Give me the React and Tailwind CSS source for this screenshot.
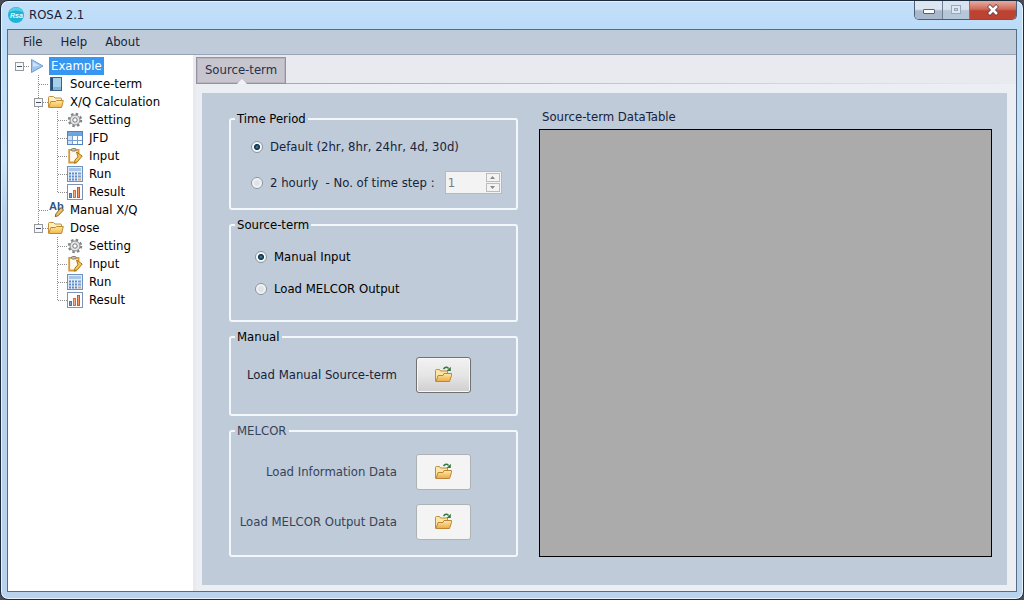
import React, { useState } from "react";

const FolderOpen = () => (
  <svg viewBox="0 0 16 16" className="h-4 w-4 shrink-0" aria-hidden="true">
    <path d="M0.5 13V3.5Q0.5 2.5 1.5 2.5H5.5L7 4H12.5Q13.5 4 13.5 5V12" fill="#fdf0bd" stroke="#c09040" />
    <path d="M0.7 13.5L2.8 7.5H7.5L8.5 6.5H15.3L13.6 13.5Z" fill="url(#folderFill)" stroke="#bd8a34" strokeLinejoin="round" />
    <defs>
      <linearGradient id="folderFill" x1="0" y1="0" x2="0" y2="1">
        <stop offset="0" stopColor="#ffeaa3" />
        <stop offset="1" stopColor="#f0b54d" />
      </linearGradient>
    </defs>
  </svg>
);

const LoadIcon = () => (
  <svg viewBox="0 0 18 18" className="h-[18px] w-[18px]" aria-hidden="true">
    <defs>
      <linearGradient id="loadFill" x1="0" y1="0" x2="0" y2="1">
        <stop offset="0" stopColor="#ffe9a8" />
        <stop offset="1" stopColor="#eda945" />
      </linearGradient>
    </defs>
    <path d="M0.5 15.5V4.5Q0.5 3.5 1.5 3.5H4.5L5.5 5H12.5V9" fill="#fbe6a2" stroke="#bb8f42" />
    <path d="M1 15.5L3 9.5H8L9 7.5H16.5V9.5L14.5 15.5Z" fill="url(#loadFill)" stroke="#bd8538" strokeLinejoin="round" />
    <path d="M8.5 3Q11 -0.2 13.6 2.4" fill="none" stroke="#34783c" strokeWidth="1.4" />
    <path d="M15.8 0.8V5H11.6Z" fill="#34783c" />
  </svg>
);

const PlayIcon = () => (
  <svg viewBox="0 0 16 16" className="h-4 w-4 shrink-0" aria-hidden="true">
    <path d="M2.5 1.5L14 8L2.5 14.5Z" fill="#9fc5ee" stroke="#6e9ccf" strokeLinejoin="round" />
    <path d="M4 4L10.5 7.8L4 8.8Z" fill="#cfe3f8" />
  </svg>
);

const BookIcon = () => (
  <svg viewBox="0 0 16 16" className="h-4 w-4 shrink-0" aria-hidden="true">
    <rect x="2.5" y="1.5" width="11" height="13" fill="#7db7d8" stroke="#3a6289" />
    <rect x="5" y="2" width="8" height="9" fill="#a5d1e9" />
    <path d="M4 2V14" stroke="#2c5079" strokeWidth="2" />
    <path d="M5 13.2H13" stroke="#8fb6d2" />
  </svg>
);

const GearIcon = () => (
  <svg viewBox="0 0 16 16" className="h-4 w-4 shrink-0" aria-hidden="true">
    <circle cx="8" cy="8" r="6" fill="none" stroke="#808286" strokeWidth="2.4" strokeDasharray="2.4 2.31" />
    <circle cx="8" cy="8" r="5" fill="#e3e4e6" stroke="#8c8e92" />
    <circle cx="8" cy="8" r="2.2" fill="#fff" stroke="#77797d" />
  </svg>
);

const TableIcon = () => (
  <svg viewBox="0 0 16 16" className="h-4 w-4 shrink-0" aria-hidden="true">
    <rect x="0.5" y="1.5" width="15" height="13" fill="#fff" stroke="#5583bd" />
    <rect x="1" y="2" width="14" height="3" fill="#6fa5e2" />
    <rect x="1" y="5" width="5" height="9" fill="#cfe1f6" />
    <path d="M5.5 2V14M10.5 2V14M1 5.5H15M1 10.5H15" stroke="#759fd1" fill="none" />
  </svg>
);

const ClipboardIcon = () => (
  <svg viewBox="0 0 16 16" className="h-4 w-4 shrink-0" aria-hidden="true">
    <path d="M2.2 1.8H11.5V11L9 14.5H2.2Z" fill="#fffaf0" stroke="#d39a38" strokeWidth="1.8" />
    <rect x="4.5" y="0.5" width="4.5" height="2.5" rx="1" fill="#bcc3cc" stroke="#8a7c62" />
    <path d="M9.5 4L15.2 8L10.5 13.5L7.5 15.2L8 12L11 8.7Z" fill="#f5c65c" stroke="#a8751f" />
  </svg>
);

const CalcIcon = () => (
  <svg viewBox="0 0 16 16" className="h-4 w-4 shrink-0" aria-hidden="true">
    <rect x="0.5" y="0.5" width="15" height="15" fill="#e3ecf8" stroke="#6d91c1" />
    <rect x="2" y="2" width="12" height="3" fill="#a9c5e8" />
    <path d="M2 7.5H11M2 10.5H11M2 13.5H11" stroke="#5f8cc8" strokeWidth="2" strokeDasharray="2 1" />
    <path d="M11 7.5H14M11 10.5H14" stroke="#7ba2d6" strokeWidth="2" />
    <path d="M11 13.5H14" stroke="#d9a47c" strokeWidth="2" />
  </svg>
);

const ChartIcon = () => (
  <svg viewBox="0 0 16 16" className="h-4 w-4 shrink-0" aria-hidden="true">
    <rect x="0.5" y="0.5" width="15" height="15" fill="#fff" stroke="#7d92b8" />
    <rect x="2.5" y="9.5" width="2" height="4" fill="#6fa3dc" stroke="#4478b5" />
    <rect x="6.5" y="6.5" width="2" height="7" fill="#f7ad86" stroke="#dd6a3a" />
    <rect x="10.5" y="3.5" width="2" height="10" fill="#f49a68" stroke="#d4522a" />
  </svg>
);

const AbIcon = () => (
  <svg viewBox="0 0 16 16" className="h-4 w-4 shrink-0 overflow-visible" aria-hidden="true">
    <text x="1" y="8" fontSize="11" fontWeight="700" fontFamily="Liberation Sans, sans-serif" fill="#2c5488">
      Ab
    </text>
    <path d="M13 5.5L15.5 8L10 13.8L7.2 14.6L8 11.8Z" fill="#f1c453" stroke="#7b6134" />
  </svg>
);

const ICONS = {
  play: PlayIcon,
  book: BookIcon,
  folder: FolderOpen,
  gear: GearIcon,
  table: TableIcon,
  clipboard: ClipboardIcon,
  calc: CalcIcon,
  chart: ChartIcon,
  ab: AbIcon,
};

// Guides per row, one letter per level:
// r root, x expandable, X last expandable, t branch, e last branch, v pass-through, n empty
const ROWS = [
  { guides: "r", icon: "play", label: "Example" },
  { guides: "nt", icon: "book", label: "Source-term" },
  { guides: "nx", icon: "folder", label: "X/Q Calculation" },
  { guides: "nvt", icon: "gear", label: "Setting" },
  { guides: "nvt", icon: "table", label: "JFD" },
  { guides: "nvt", icon: "clipboard", label: "Input" },
  { guides: "nvt", icon: "calc", label: "Run" },
  { guides: "nve", icon: "chart", label: "Result" },
  { guides: "nt", icon: "ab", label: "Manual X/Q" },
  { guides: "nX", icon: "folder", label: "Dose" },
  { guides: "nnt", icon: "gear", label: "Setting" },
  { guides: "nnt", icon: "clipboard", label: "Input" },
  { guides: "nnt", icon: "calc", label: "Run" },
  { guides: "nne", icon: "chart", label: "Result" },
];

const Guide = ({ kind }) => {
  const expandable = "rxX".includes(kind);
  return (
    <svg viewBox="0 0 19 18" className="h-[18px] w-[19px] shrink-0" aria-hidden="true">
      <g stroke="#8c8c8c" strokeDasharray="1 1" fill="none">
        {"xvt".includes(kind) && <path d="M9.5 0V18" />}
        {"Xe".includes(kind) && <path d="M9.5 0V10" />}
        {"rxXte".includes(kind) && <path d="M10 9.5H19" />}
      </g>
      {expandable && (
        <g>
          <rect x="5.5" y="5.5" width="8" height="8" fill="#f7f7f7" stroke="#989898" />
          <path d="M7 9.5H12" stroke="#3f4f77" />
        </g>
      )}
    </svg>
  );
};

const Tree = () => {
  const [selected, setSelected] = useState(0);
  return (
    <nav aria-label="Project" className="w-[185px] shrink-0 bg-white pt-0.5 pl-0.5">
      <ul>
        {ROWS.map((row, i) => {
          const Icon = ICONS[row.icon];
          return (
            <li key={i} className="flex h-[18px] items-center">
              {row.guides.split("").map((k, j) => (
                <Guide key={j} kind={k} />
              ))}
              <Icon />
              <button
                type="button"
                onClick={() => setSelected(i)}
                className={
                  i === selected
                    ? "ml-1 h-[18px] bg-[#3796f0] px-0.5 leading-[18px] text-white"
                    : "ml-1 h-[18px] px-0.5 leading-[18px] text-black"
                }
              >
                {row.label}
              </button>
            </li>
          );
        })}
      </ul>
    </nav>
  );
};

const Group = ({ title, className, muted, children }) => (
  <fieldset className={"rounded-[3px] border-2 border-[#f2f7fb] " + className}>
    <legend className={muted ? "ml-1 px-0.5 leading-4 text-[#35435a]" : "ml-1 px-0.5 leading-4 text-black"}>{title}</legend>
    {children}
  </fieldset>
);

const radioClass =
  "m-0 h-3 w-3 shrink-0 appearance-none rounded-full border border-[#8b96a2] bg-[radial-gradient(circle,#dfe2e6_30%,#fafafa_70%)] checked:bg-[radial-gradient(circle_at_50%_50%,#4f94b0_0%,#164058_25%,#12384e_38%,#f1f5f7_48%)]";

const Radio = ({ name, label, checked, onChange, strong }) => (
  <label className={strong ? "flex items-center gap-[7px] text-black" : "flex items-center gap-[7px]"}>
    <input type="radio" name={name} checked={checked} onChange={onChange} className={radioClass} />
    <span className="whitespace-pre">{label}</span>
  </label>
);

const LoadRow = ({ id, label, muted }) => (
  <div className="flex items-center justify-end gap-[19px] pr-[45px]">
    <label htmlFor={id} className={muted ? "text-[#35435a]" : "text-[#16233c]"}>
      {label}
    </label>
    <button
      id={id}
      type="button"
      aria-label={label}
      className={
        muted
          ? "flex h-9 w-[55px] items-center justify-center rounded-[3px] border border-[#adb2b5] bg-[#f4f4f4]"
          : "flex h-9 w-[55px] items-center justify-center rounded-[3px] border border-[#707070] bg-linear-to-b from-[#f2f2f2] via-[#e6e6e6] to-[#cfcfcf] inset-ring inset-ring-[#f8f8f8]"
      }
    >
      <LoadIcon />
    </button>
  </div>
);

const TitleBar = () => (
  <header className="flex h-7 shrink-0 items-start justify-between">
    <div className="flex h-7 items-center gap-[5px] pl-px">
      <svg viewBox="0 0 16 16" className="h-4 w-4" aria-hidden="true">
        <circle cx="8" cy="8" r="8" fill="#1fb4d6" />
        <path d="M0.8 5A8 8 0 0 1 15.2 5Q8 2 0.8 5" fill="#55d0e6" />
        <text x="2" y="11" fontSize="7" fontStyle="italic" fontWeight="700" fontFamily="Liberation Sans, sans-serif" fill="#e9fbff">
          Rsa
        </text>
      </svg>
      <h1>ROSA 2.1</h1>
    </div>
    <div className="flex h-[19px] overflow-hidden rounded-b-[5px] border border-t-0 border-[#4e6079]">
      <button
        type="button"
        aria-label="Minimize"
        className="flex w-[28px] items-center justify-center border-r border-[#6c7d94] bg-linear-to-b from-[#dde6f0] from-45% to-[#a9b9cb] to-55%"
      >
        <svg viewBox="0 0 14 12" className="h-3 w-3.5" aria-hidden="true">
          <rect x="1.5" y="5.5" width="11" height="4" rx="0.5" fill="#fff" stroke="#53627a" />
        </svg>
      </button>
      <button
        type="button"
        aria-label="Maximize"
        disabled
        className="flex w-[27px] items-center justify-center border-r border-[#6c7d94] bg-linear-to-b from-[#d9e4f0] from-45% to-[#b7c7da] to-55%"
      >
        <svg viewBox="0 0 14 12" className="h-3 w-3.5" aria-hidden="true">
          <rect x="2.5" y="1.5" width="9" height="8" fill="#dfe8f2" stroke="#98a8bc" />
          <rect x="5.5" y="4.5" width="3" height="2" fill="#c4d1e0" stroke="#98a8bc" />
        </svg>
      </button>
      <button
        type="button"
        aria-label="Close"
        className="flex w-[46px] items-center justify-center bg-linear-to-b from-[#e3a598] from-5% via-[#cf6a5a] via-45% to-[#bd4231] to-55%"
      >
        <svg viewBox="0 0 14 12" className="h-3 w-3.5" aria-hidden="true">
          <path d="M2.5 1.5L11.5 10.5M11.5 1.5L2.5 10.5" stroke="#5d3a42" strokeWidth="4" />
          <path d="M3 2L11 10M11 2L3 10" stroke="#fff" strokeWidth="2.6" />
        </svg>
      </button>
    </div>
  </header>
);

export default function App() {
  const [period, setPeriod] = useState("default");
  const [source, setSource] = useState("manual");
  const [steps, setSteps] = useState(1);

  return (
    <div className="min-h-screen bg-[#4a4d58] text-[13px] leading-4 text-[#16233c] [font-family:'DejaVu_Sans_Condensed','Noto_Sans',sans-serif]">
      <div className="flex min-h-screen flex-col rounded-lg border border-[#1d2c3c] bg-[linear-gradient(180deg,#c5dff8_0px,#bbdcf8_28px,#c9e3fa_160px,#b9d3ee_210px,#b9d3ee_100%)] px-[6px] pb-[7px] inset-ring inset-ring-[#e6f3fd]">
        <TitleBar />
        <div className="flex flex-1 flex-col border border-[#586c84] bg-[#e9eaef]">
          <nav aria-label="Main" className="flex h-[25px] shrink-0 items-center gap-[18px] border-b border-[#98a3b5] bg-[#bfcbd8] pl-[15px]">
            <button type="button">File</button>
            <button type="button">Help</button>
            <button type="button">About</button>
          </nav>
          <div className="flex flex-1">
            <Tree />
            <main className="flex flex-1 flex-col pt-0.5 pl-[3px]">
              <div role="tablist" className="flex">
                <button
                  type="button"
                  role="tab"
                  aria-selected="true"
                  className="relative h-[27px] w-[90px] border border-[#9691a1] bg-[#c7c5ce] pb-0.5 text-[#28304a] inset-ring inset-ring-[#b8b5c1]"
                >
                  Source-term
                  <svg viewBox="0 0 10 5" className="absolute -bottom-px left-10 h-[5px] w-2.5" aria-hidden="true">
                    <path d="M0 5L5 0L10 5Z" fill="#f1f3f7" />
                  </svg>
                </button>
                <div className="mt-auto h-px flex-1 bg-linear-to-r from-[#aaa6b2] to-[#e9eaef]" />
              </div>
              <div className="flex flex-1 bg-[#ebeff4] pt-[9px] pr-[9px] pb-[6px] pl-[6px]">
                <section role="tabpanel" className="flex flex-1 gap-[21px] bg-[#bfcbd8] pt-[18px] pr-[15px] pb-7 pl-[27px]">
                  <div className="flex w-[289px] shrink-0 flex-col gap-[7px]">
                    <Group title="Time Period" className="h-[99px]">
                      <div className="flex flex-col gap-4 pt-3 pl-5">
                        <Radio
                          name="period"
                          label="Default (2hr, 8hr, 24hr, 4d, 30d)"
                          checked={period === "default"}
                          onChange={() => setPeriod("default")}
                        />
                        <div className="flex items-center gap-[10px]">
                          <Radio
                            name="period"
                            label="2 hourly  - No. of time step :"
                            checked={period === "hourly"}
                            onChange={() => setPeriod("hourly")}
                          />
                          <div className="flex h-[23px] w-[57px] border border-[#b3bac3] bg-[#f3f3f3] p-px">
                            <input
                              type="text"
                              inputMode="numeric"
                              aria-label="No. of time step"
                              value={steps}
                              readOnly
                              className="w-0 flex-1 px-px text-[#7c7c7c] outline-none"
                            />
                            <div className="flex w-[14px] flex-col gap-px">
                              <button
                                type="button"
                                aria-label="Increase"
                                onClick={() => setSteps(steps + 1)}
                                className="flex flex-1 items-center justify-center border border-[#bcbcbc]"
                              >
                                <svg viewBox="0 0 5 3" className="h-[3px] w-[5px]" aria-hidden="true">
                                  <path d="M0 3L2.5 0L5 3Z" fill="#888" />
                                </svg>
                              </button>
                              <button
                                type="button"
                                aria-label="Decrease"
                                onClick={() => setSteps(Math.max(1, steps - 1))}
                                className="flex flex-1 items-center justify-center border border-[#bcbcbc]"
                              >
                                <svg viewBox="0 0 5 3" className="h-[3px] w-[5px]" aria-hidden="true">
                                  <path d="M0 0L2.5 3L5 0Z" fill="#888" />
                                </svg>
                              </button>
                            </div>
                          </div>
                        </div>
                      </div>
                    </Group>
                    <Group title="Source-term" className="h-[105px]">
                      <div className="flex flex-col gap-4 pt-4 pl-6">
                        <Radio strong name="source" label="Manual Input" checked={source === "manual"} onChange={() => setSource("manual")} />
                        <Radio strong name="source" label="Load MELCOR Output" checked={source === "melcor"} onChange={() => setSource("melcor")} />
                      </div>
                    </Group>
                    <Group title="Manual" className="h-[87px]">
                      <div className="pt-3">
                        <LoadRow id="manual" label="Load Manual Source-term" />
                      </div>
                    </Group>
                    <Group title="MELCOR" className="h-[134px]" muted>
                      <div className="flex flex-col gap-3.5 pt-[15px]">
                        <LoadRow id="info" label="Load Information Data" muted />
                        <LoadRow id="output" label="Load MELCOR Output Data" muted />
                      </div>
                    </Group>
                  </div>
                  <div className="flex flex-1 flex-col gap-[6px]">
                    <h2 className="pl-[3px] leading-3">Source-term DataTable</h2>
                    <div role="region" aria-label="Source-term DataTable" className="flex-1 border border-black bg-[#ababab]" />
                  </div>
                </section>
              </div>
            </main>
          </div>
        </div>
      </div>
    </div>
  );
}
